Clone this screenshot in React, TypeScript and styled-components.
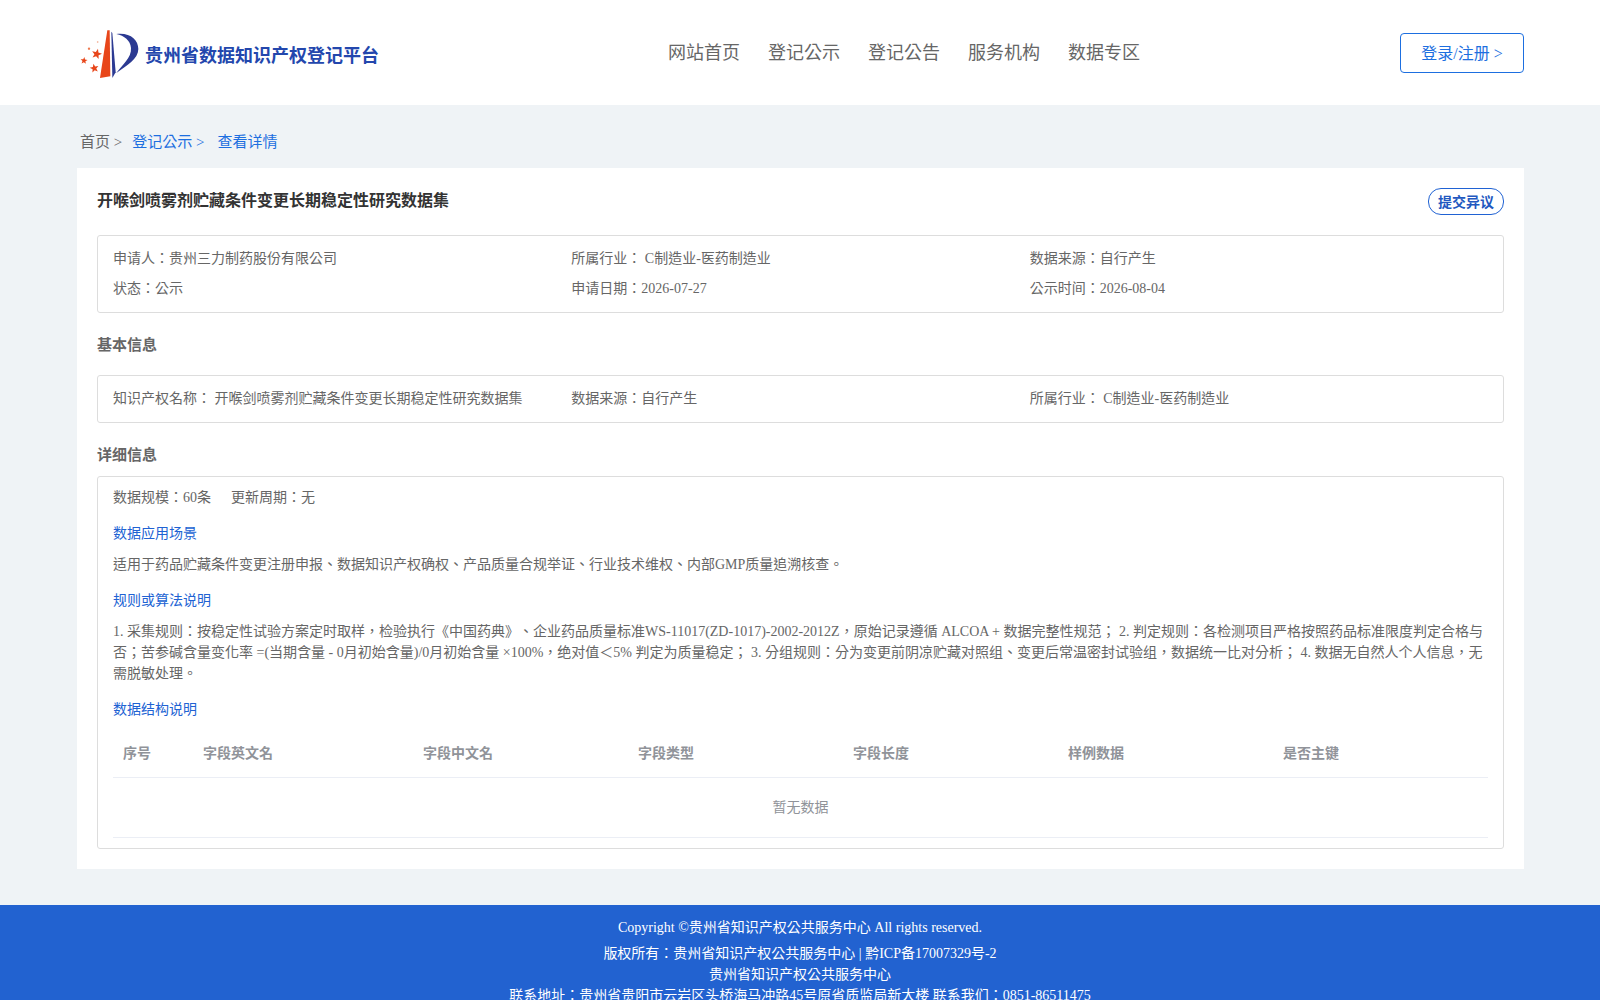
import React from "react";
import styled, { createGlobalStyle } from "styled-components";

const GlobalStyle = createGlobalStyle`
	html, body {
		margin: 0;
		padding: 0;
		background: #eff3f6;
		font-family: "Liberation Serif", "Noto Sans CJK TC", serif;
		text-spacing-trim: space-all;
		color: #666;
	}
	* {
		box-sizing: border-box;
	}
`;

const navItems = ["网站首页", "登记公示", "登记公告", "服务机构", "数据专区"];
const columns = [
	{ label: "序号", width: 80 },
	{ label: "字段英文名", width: 220 },
	{ label: "字段中文名", width: 215 },
	{ label: "字段类型", width: 215 },
	{ label: "字段长度", width: 215 },
	{ label: "样例数据", width: 215 },
	{ label: "是否主键", width: 215 },
];

const starPoints = (cx: number, cy: number, r: number, turn: number) =>
	Array.from({ length: 10 }, (_, i) => {
		const radius = i % 2 === 0 ? r : r * 0.42;
		const angle = turn + (i * Math.PI) / 5;
		return `${cx + radius * Math.sin(angle)},${cy - radius * Math.cos(angle)}`;
	}).join(" ");

const Logo = () => (
	<svg width="70" height="60" viewBox="0 0 210 180">
		<path d="M97 22 L104 22 L106 160 L75 165 Z" fill="#e8461a" />
		<path d="M109 26 L112 30 L122 148 L112 165 Z" fill="#2c3a92" />
		<path
			d="M124 33 C165 28 190 50 190 78 C190 108 155 128 124 150 C142 125 170 105 168 75 C166 52 148 38 124 33 Z"
			fill="#2c3a92"
		/>
		<polygon points={starPoints(65, 93, 16, 0.25)} fill="#e8461a" />
		<polygon points={starPoints(27, 113, 11, 0.1)} fill="#e8461a" />
		<polygon points={starPoints(58, 136, 14, -0.2)} fill="#e8461a" />
		<circle cx="42" cy="77" r="3.5" fill="#ee7a50" />
		<circle cx="68" cy="57" r="2.5" fill="#f0a080" />
	</svg>
);

export default function App() {
	return (
		<>
			<GlobalStyle />
			<Header>
				<Brand>
					<Logo />
					<BrandName>贵州省数据知识产权登记平台</BrandName>
				</Brand>
				<Nav>
					{navItems.map((item) => (
						<NavLink key={item}>{item}</NavLink>
					))}
				</Nav>
				<LoginButton>登录/注册 &gt;</LoginButton>
			</Header>

			<Main>
				<Breadcrumb>
					<span>首页 &gt;</span>
					<Crumb>登记公示 &gt;</Crumb>
					<Crumb>查看详情</Crumb>
				</Breadcrumb>

				<Card>
					<TitleRow>
						<Title>开喉剑喷雾剂贮藏条件变更长期稳定性研究数据集</Title>
						<ObjectButton>提交异议</ObjectButton>
					</TitleRow>

					<InfoBox>
						<InfoGrid>
							<span>申请人：贵州三力制药股份有限公司</span>
							<span>所属行业： C制造业-医药制造业</span>
							<span>数据来源：自行产生</span>
							<span>状态：公示</span>
							<span>申请日期：2026-07-27</span>
							<span>公示时间：2026-08-04</span>
						</InfoGrid>
					</InfoBox>

					<SectionTitle>基本信息</SectionTitle>
					<InfoBox>
						<InfoGrid>
							<span>知识产权名称： 开喉剑喷雾剂贮藏条件变更长期稳定性研究数据集</span>
							<span>数据来源：自行产生</span>
							<span>所属行业： C制造业-医药制造业</span>
						</InfoGrid>
					</InfoBox>

					<DetailTitle>详细信息</DetailTitle>
					<DetailBox>
						<ScaleRow>
							<span>数据规模：60条</span>
							<span>更新周期：无</span>
						</ScaleRow>
						<SubTitle>数据应用场景</SubTitle>
						<Paragraph>
							适用于药品贮藏条件变更注册申报、数据知识产权确权、产品质量合规举证、行业技术维权、内部GMP质量追溯核查。
						</Paragraph>
						<SubTitle>规则或算法说明</SubTitle>
						<Paragraph>
							1. 采集规则：按稳定性试验方案定时取样，检验执行《中国药典》、企业药品质量标准WS-11017(ZD-1017)-2002-2012Z，原始记录遵循 ALCOA + 数据完整性规范； 2. 判定规则：各检测项目严格按照药品标准限度判定合格与否；苦参碱含量变化率 =(当期含量 - 0月初始含量)/0月初始含量 ×100%，绝对值＜5% 判定为质量稳定； 3. 分组规则：分为变更前阴凉贮藏对照组、变更后常温密封试验组，数据统一比对分析； 4. 数据无自然人个人信息，无需脱敏处理。
						</Paragraph>
						<SubTitle>数据结构说明</SubTitle>
						<TableHead>
							{columns.map((col) => (
								<HeadCell key={col.label} $width={col.width}>
									{col.label}
								</HeadCell>
							))}
						</TableHead>
						<EmptyRow>暂无数据</EmptyRow>
					</DetailBox>
				</Card>
			</Main>

			<Footer>
				<Copyright>Copyright ©贵州省知识产权公共服务中心 All rights reserved.</Copyright>
				<FooterLine>版权所有：贵州省知识产权公共服务中心 | 黔ICP备17007329号-2</FooterLine>
				<FooterLine>贵州省知识产权公共服务中心</FooterLine>
				<FooterLine>联系地址：贵州省贵阳市云岩区头桥海马冲路45号原省质监局新大楼 联系我们：0851-86511475</FooterLine>
			</Footer>
		</>
	);
}

const Header = styled.header`
	height: 105px;
	background: #fff;
	padding: 0 76px 0 77px;
	display: flex;
	align-items: center;
	justify-content: space-between;
`;
const Brand = styled.div`
	display: flex;
	align-items: center;
	width: 333px;
	margin-left: -2px;
`;
const BrandName = styled.div`
	font-size: 18px;
	font-weight: 700;
	color: #2347ad;
	margin-top: 3px;
`;
const Nav = styled.nav`
	display: flex;
	gap: 28px;
	margin-top: -4px;
`;
const NavLink = styled.a`
	font-size: 18px;
	color: #666;
`;
const LoginButton = styled.button`
	width: 124px;
	height: 40px;
	padding: 0 0 1px;
	background: #fff;
	border: 1px solid #1d6fe0;
	border-radius: 4px;
	color: #1d6fe0;
	font: inherit;
	font-size: 16px;
`;
const Main = styled.main`
	padding: 0 76px 36px 77px;
`;
const Breadcrumb = styled.div`
	height: 63px;
	display: flex;
	align-items: center;
	gap: 10px;
	padding: 8px 0 0 3px;
	font-size: 15px;
	color: #666;
`;
const Crumb = styled.span`
	color: #1d6fe0;
	margin-right: 3px;
`;
const Card = styled.section`
	background: #fff;
	padding: 20px;
`;
const TitleRow = styled.div`
	display: flex;
	justify-content: space-between;
	align-items: flex-start;
	margin-bottom: 20px;
`;
const Title = styled.h1`
	margin: 0;
	font-size: 16px;
	font-weight: 700;
	line-height: 25px;
	color: #333;
`;
const ObjectButton = styled.button`
	width: 76px;
	height: 27px;
	padding: 0 0 2px;
	background: #fff;
	border: 1px solid #2062d3;
	border-radius: 13px;
	color: #2258c0;
	font: inherit;
	font-size: 14px;
	font-weight: 700;
`;
const InfoBox = styled.div`
	border: 1px solid #ddd;
	border-radius: 3px;
	padding: 8px 15px;
`;
const InfoGrid = styled.div`
	display: grid;
	grid-template-columns: repeat(3, 1fr);
	font-size: 14px;
	line-height: 30px;
	color: #666;
`;
const SectionTitle = styled.h2`
	margin: 0;
	height: 62px;
	padding-bottom: 2px;
	display: flex;
	align-items: center;
	font-size: 15px;
	font-weight: 700;
	color: #666;
`;
const DetailTitle = styled(SectionTitle)`
	height: 53px;
	padding: 7px 0 0;
`;
const DetailBox = styled.div`
	border: 1px solid #ddd;
	border-radius: 3px;
	padding: 0 15px 10px;
	font-size: 14px;
`;
const ScaleRow = styled.div`
	display: flex;
	gap: 20px;
	line-height: 21px;
	padding: 10px 0 0;
	color: #666;
`;
const SubTitle = styled.h3`
	margin: 15px 0 0;
	font-size: 14px;
	font-weight: 400;
	line-height: 21px;
	color: #2062d3;
`;
const Paragraph = styled.p`
	margin: 10px 0 0;
	line-height: 21px;
	color: #666;
`;
const TableHead = styled.div`
	display: flex;
	margin-top: 6px;
	height: 52px;
	align-items: center;
	border-bottom: 1px solid #ebeef5;
`;
const HeadCell = styled.div<{ $width: number }>`
	width: ${(props) => props.$width}px;
	padding-left: 10px;
	font-weight: 700;
	color: #909399;
`;
const EmptyRow = styled.div`
	height: 60px;
	padding-bottom: 4px;
	display: flex;
	align-items: center;
	justify-content: center;
	color: #909399;
	border-bottom: 1px solid #ebeef5;
`;
const Footer = styled.footer`
	background: #2262d0;
	padding: 12px 0 20px;
	color: #fff;
	font-size: 14px;
	text-align: center;
`;
const Copyright = styled.div`
	line-height: 21px;
	margin-bottom: 5px;
`;
const FooterLine = styled.div`
	line-height: 21px;
`;
